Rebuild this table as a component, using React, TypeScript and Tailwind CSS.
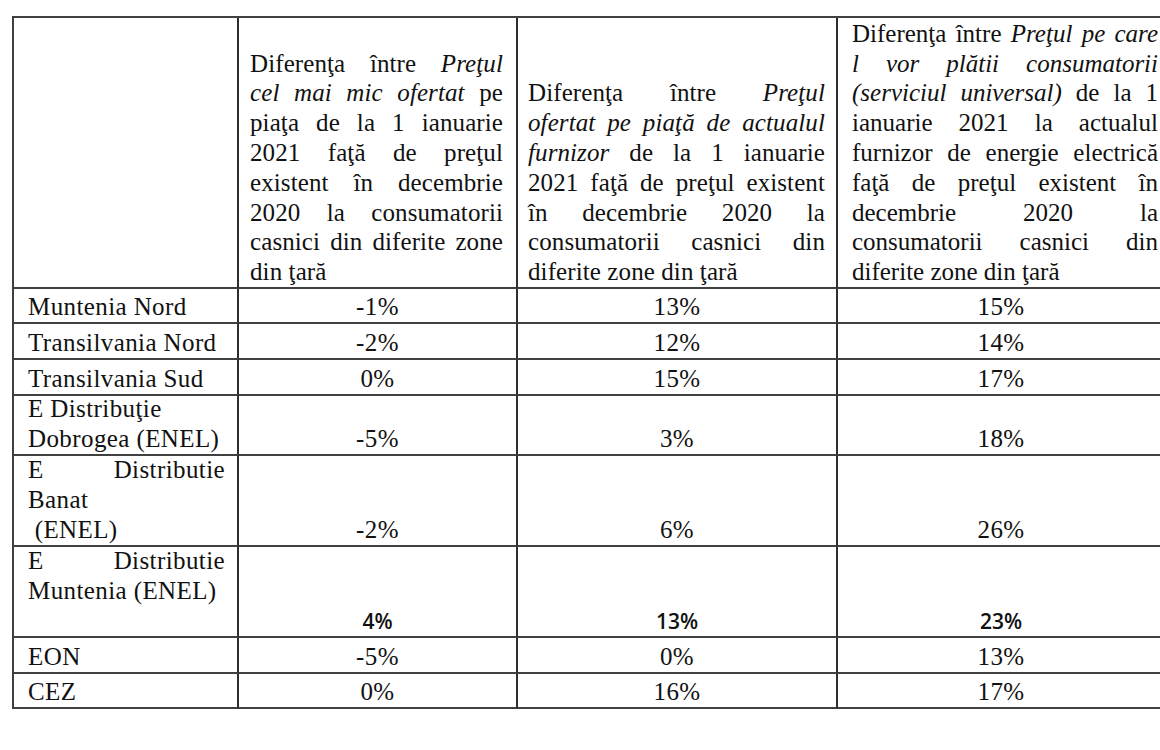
import React from "react";

const J = ({ children }: { children: React.ReactNode }) => (
  <div className="text-justify [text-align-last:justify]">{children}</div>
);
const L = ({ children }: { children?: React.ReactNode }) => (
  <div className="text-left h-[30px]">{children}</div>
);

const cellBase = "border-r-2 border-b-2 border-[#404040] flex flex-col justify-end overflow-hidden";

const rows: { label: React.ReactNode; vals: string[]; sans?: boolean }[] = [
  { label: <L>Muntenia Nord</L>, vals: ["-1%", "13%", "15%"] },
  { label: <L>Transilvania Nord</L>, vals: ["-2%", "12%", "14%"] },
  { label: <L>Transilvania Sud</L>, vals: ["0%", "15%", "17%"] },
  {
    label: (
      <>
        <L>E Distribuţie</L>
        <L>Dobrogea (ENEL)</L>
      </>
    ),
    vals: ["-5%", "3%", "18%"],
  },
  {
    label: (
      <>
        <J>E Distributie</J>
        <L>Banat</L>
        <L>{"\u00a0(ENEL)"}</L>
      </>
    ),
    vals: ["-2%", "6%", "26%"],
  },
  {
    label: (
      <>
        <J>E Distributie</J>
        <L>Muntenia (ENEL)</L>
        <L>{"\u00a0"}</L>
      </>
    ),
    vals: ["4%", "13%", "23%"],
    sans: true,
  },
  { label: <L>EON</L>, vals: ["-5%", "0%", "13%"] },
  { label: <L>CEZ</L>, vals: ["0%", "16%", "17%"] },
];

const padX = ["pl-[11px] pr-[13px]", "pl-[10px] pr-[11px]", "pl-[14px] pr-[6px]"];

export default function App() {
  return (
    <div className="w-[1160px] h-[750px] overflow-hidden bg-white text-[#111111] font-['Liberation_Serif','Times_New_Roman',serif] text-[25px] leading-[30px] tracking-[0.4px]">
      <div className="pl-[12px] pt-[16px]">
        <div className="grid w-max grid-cols-[225px_279px_320px_328px] grid-rows-[271px_35px_36px_36px_60px_91px_91px_36px_35px] border-t-2 border-l-2 border-[#404040]">
          {/* header */}
          <div className={`${cellBase} border-r-[#2e2e2e]`} />
          <div className={`${cellBase} border-r-[#2e2e2e] leading-[29.8px] tracking-[0.1px] ${padX[0]}`}>
            <J>
              Diferenţa între <i>Preţul</i>
            </J>
            <J>
              <i>cel mai mic ofertat</i> pe
            </J>
            <J>piaţa de la 1 ianuarie</J>
            <J>2021 faţă de preţul</J>
            <J>existent în decembrie</J>
            <J>2020 la consumatorii</J>
            <J>casnici din diferite zone</J>
            <div>din ţară</div>
          </div>
          <div className={`${cellBase} border-r-[#2e2e2e] leading-[29.8px] tracking-[0.1px] ${padX[1]}`}>
            <J>
              Diferenţa între <i>Preţul</i>
            </J>
            <J>
              <i>ofertat pe piaţă de actualul</i>
            </J>
            <J>
              <i>furnizor</i> de la 1 ianuarie
            </J>
            <J>2021 faţă de preţul existent</J>
            <J>în decembrie 2020 la</J>
            <J>consumatorii casnici din</J>
            <div>diferite zone din ţară</div>
          </div>
          <div className={`${cellBase} leading-[29.8px] tracking-normal ${padX[2]}`}>
            <J>
              Diferenţa între <i>Preţul pe care</i>
            </J>
            <J>
              <i>l vor plătii consumatorii</i>
            </J>
            <J>
              <i>(serviciul universal)</i> de la 1
            </J>
            <J>ianuarie 2021 la actualul</J>
            <J>furnizor de energie electrică</J>
            <J>faţă de preţul existent în</J>
            <J>decembrie 2020 la</J>
            <J>consumatorii casnici din</J>
            <div>diferite zone din ţară</div>
          </div>

          {rows.map((r, i) => (
            <React.Fragment key={i}>
              <div className={`${cellBase} border-r-[#2e2e2e] pl-[14px] pr-[12px]`}>{r.label}</div>
              {r.vals.map((v, j) => (
                <div
                  key={j}
                  className={`${cellBase} ${j < 2 ? "border-r-[#2e2e2e]" : ""} items-center ${
                    r.sans
                      ? "font-['Open_Sans','Liberation_Sans',sans-serif] font-semibold text-[21px] tracking-normal"
                      : ""
                  }`}
                >
                  <div className="h-[30px]">{v}</div>
                </div>
              ))}
            </React.Fragment>
          ))}
        </div>
      </div>
    </div>
  );
}
